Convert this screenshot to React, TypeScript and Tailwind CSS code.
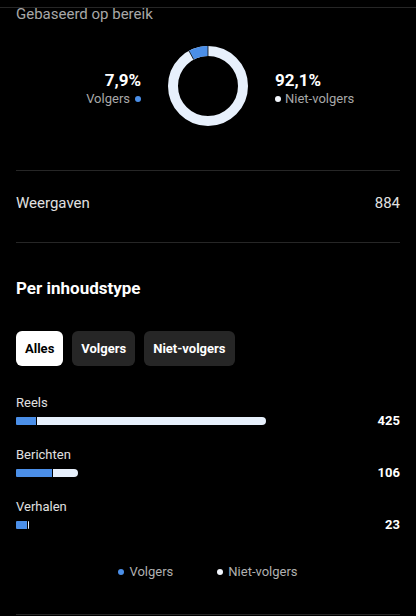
import React from "react"

const rows = [
  { label: "Reels", total: 425, followers: 34 },
  { label: "Berichten", total: 106, followers: 61 },
  { label: "Verhalen", total: 23, followers: 19 },
]

const SCALE = 250 / 425

function Donut({ pct }: { pct: number }) {
  const r = 35
  const a = (pct / 100) * Math.PI * 2
  const sx = 40 - r * Math.sin(a)
  const sy = 40 - r * Math.cos(a)
  const ox = 40 - 40 * Math.sin(a)
  const oy = 40 - 40 * Math.cos(a)
  const ix = 40 - 30 * Math.sin(a)
  const iy = 40 - 30 * Math.cos(a)
  return (
    <svg width="80" height="80" viewBox="0 0 80 80">
      <circle cx="40" cy="40" r={r} fill="none" stroke="#e7f0fc" strokeWidth="10" />
      <path d={`M ${sx} ${sy} A ${r} ${r} 0 0 1 40 5`} fill="none" stroke="#4b8fe8" strokeWidth="10" />
      <line x1="40" y1="0" x2="40" y2="10" stroke="#000" strokeWidth="0.8" />
      <line x1={ox} y1={oy} x2={ix} y2={iy} stroke="#000" strokeWidth="0.8" />
    </svg>
  )
}

export default function App() {
  return (
    <div className="w-[416px] h-[616px] overflow-hidden bg-black text-[#e0e0e0]" style={{ fontFamily: "Roboto, 'Liberation Sans', sans-serif" }}>
      {/* sticky header edge */}
      <div className="h-2 border-b border-[#262626]" />

      <div className="px-4">
        <p className="text-[15px] leading-[12px] text-[#a8a8a8]">Gebaseerd op bereik</p>

        {/* Donut */}
        <div className="mt-[26px] -mx-4 grid grid-cols-[1fr_80px_1fr] gap-x-[27px] items-center">
          <div className="flex flex-col items-end pt-1">
            <span className="text-[17px] leading-5 font-bold text-white">7,9%</span>
            <div className="mt-px flex items-center gap-[5px]">
              <span className="text-[13px] leading-4 text-[#a8a8a8]">Volgers</span>
              <span className="w-[6px] h-[6px] rounded-full bg-[#4b8fe8]" />
            </div>
          </div>
          <Donut pct={7.9} />
          <div className="flex flex-col items-start pt-1">
            <span className="text-[17px] leading-5 font-bold text-white">92,1%</span>
            <div className="mt-px flex items-center gap-1">
              <span className="w-[6px] h-[6px] rounded-full bg-[#f2f6fc]" />
              <span className="text-[13px] leading-4 text-[#a8a8a8]">Niet-volgers</span>
            </div>
          </div>
        </div>

        {/* Weergaven */}
        <div className="mt-[44px] border-t border-[#262626] pt-[22px] pb-[29px] flex items-center justify-between text-[15px] leading-5">
          <span>Weergaven</span>
          <span>884</span>
        </div>

        {/* Per inhoudstype */}
        <div className="border-t border-[#262626] pt-[34px]">
          <h2 className="text-[17px] leading-[22px] font-bold text-white">Per inhoudstype</h2>

          <div className="mt-8 flex gap-[9px]">
            <button className="h-[35px] px-[9px] rounded-md bg-white text-black text-[13px] font-bold">Alles</button>
            <button className="h-[35px] px-[9px] rounded-md bg-[#262626] text-white text-[13px] font-bold">Volgers</button>
            <button className="h-[35px] px-[9px] rounded-md bg-[#262626] text-white text-[13px] font-bold">Niet-volgers</button>
          </div>

          <div className="mt-[29px] flex flex-col gap-[18px]">
            {rows.map((row) => (
              <div key={row.label}>
                <p className="text-[13px] leading-4 text-[#e0e0e0]">{row.label}</p>
                <div className="mt-0.5 flex items-center justify-between">
                  <div className="flex items-center h-4">
                    <div className="h-2 rounded-l-[1px] bg-[#4b8fe8]" style={{ width: Math.round(row.followers * SCALE) }} />
                    <div className="ml-px h-2 rounded-r bg-[#e7f0fc]" style={{ width: Math.max(1, Math.round((row.total - row.followers) * SCALE) - 1) }} />
                  </div>
                  <span className="text-[13px] leading-4 font-bold text-white">{row.total}</span>
                </div>
              </div>
            ))}
          </div>

          {/* Legend */}
          <div className="mt-[31px] flex justify-center gap-[44px] text-[13px] leading-4 text-[#b0b0b0]">
            <div className="flex items-center gap-[5px]">
              <span className="w-[6px] h-[6px] rounded-full bg-[#4b8fe8]" />
              <span>Volgers</span>
            </div>
            <div className="flex items-center gap-[5px]">
              <span className="w-[6px] h-[6px] rounded-full bg-[#f2f6fc]" />
              <span>Niet-volgers</span>
            </div>
          </div>

          <div className="mt-[34px] border-t border-[#262626]" />
        </div>
      </div>
    </div>
  )
}
